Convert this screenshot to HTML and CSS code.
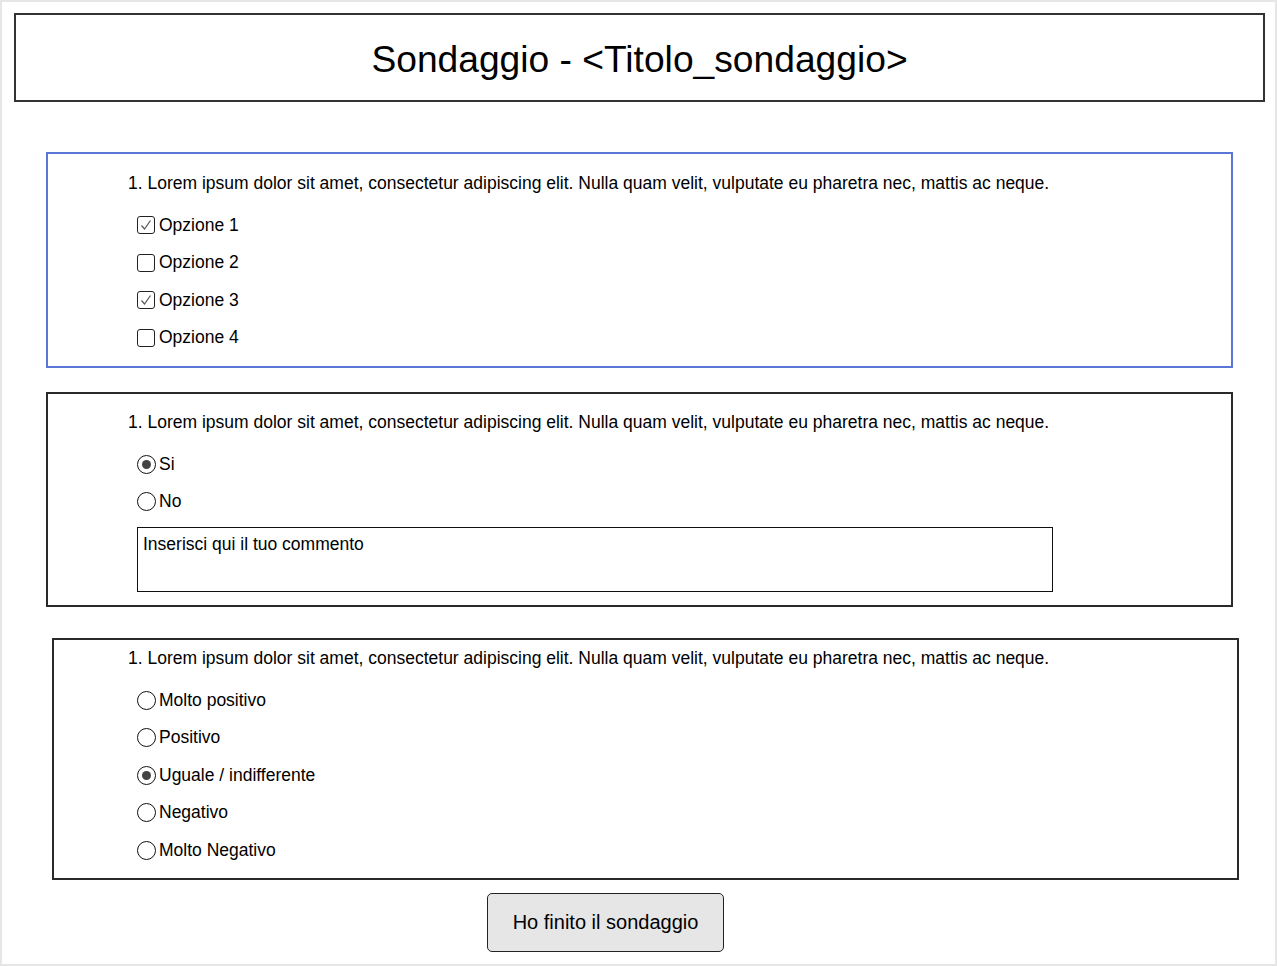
FILE: index.html
```html
<!DOCTYPE html>
<html lang="it">
<head>
<meta charset="utf-8">
<title>Sondaggio</title>
<link rel="stylesheet" href="styles.css">
</head>
<body>
<div class="frame">
  <header class="title-box">
    <h1 class="title">Sondaggio - &lt;Titolo_sondaggio&gt;</h1>
  </header>

  <section class="card card-active card-1">
    <p class="question">1. Lorem ipsum dolor sit amet, consectetur adipiscing elit. Nulla quam velit, vulputate eu pharetra nec, mattis ac neque.</p>
    <ul class="options">
      <li class="option"><span class="check checked"><svg viewBox="0 0 18 18" width="18" height="18"><polyline points="4.5,9.5 7.5,13 13.5,4.5" fill="none" stroke="#555" stroke-width="1.2"/></svg></span>Opzione 1</li>
      <li class="option"><span class="check"></span>Opzione 2</li>
      <li class="option"><span class="check checked"><svg viewBox="0 0 18 18" width="18" height="18"><polyline points="4.5,9.5 7.5,13 13.5,4.5" fill="none" stroke="#555" stroke-width="1.2"/></svg></span>Opzione 3</li>
      <li class="option"><span class="check"></span>Opzione 4</li>
    </ul>
  </section>

  <section class="card card-2">
    <p class="question">1. Lorem ipsum dolor sit amet, consectetur adipiscing elit. Nulla quam velit, vulputate eu pharetra nec, mattis ac neque.</p>
    <ul class="options">
      <li class="option"><span class="radio selected"></span>Si</li>
      <li class="option"><span class="radio"></span>No</li>
    </ul>
    <div class="comment">Inserisci qui il tuo commento</div>
  </section>

  <section class="card card-3">
    <p class="question">1. Lorem ipsum dolor sit amet, consectetur adipiscing elit. Nulla quam velit, vulputate eu pharetra nec, mattis ac neque.</p>
    <ul class="options">
      <li class="option"><span class="radio"></span>Molto positivo</li>
      <li class="option"><span class="radio"></span>Positivo</li>
      <li class="option"><span class="radio selected"></span>Uguale / indifferente</li>
      <li class="option"><span class="radio"></span>Negativo</li>
      <li class="option"><span class="radio"></span>Molto Negativo</li>
    </ul>
  </section>

  <button class="finish" type="button">Ho finito il sondaggio</button>
</div>
</body>
</html>
```

FILE: styles.css
```css
* { box-sizing: border-box; }

html, body {
  margin: 0;
  padding: 0;
  background: #ffffff;
}

body {
  font-family: "Liberation Sans", Arial, sans-serif;
  color: #000;
}

.frame {
  width: 1277px;
  height: 966px;
  border: 2px solid #e6e6e6;
  display: flex;
  flex-direction: column;
  align-items: flex-start;
  padding-top: 11px;
}

.title-box {
  margin-left: 12px;
  width: 1251px;
  height: 89px;
  border: 2px solid #333;
  display: flex;
  align-items: center;
  justify-content: center;
}

.title {
  margin: 0;
  font-weight: normal;
  font-size: 37.2px;
  line-height: 40px;
  padding-top: 2px;
}

.card {
  width: 1187px;
  border: 2px solid #2a2a2a;
  padding-left: 80px;
}

.card-active { border-color: #5b76d8; }

.card-1 {
  margin-top: 50px;
  margin-left: 44px;
  height: 216px;
  padding-top: 19px;
}

.card-2 {
  margin-top: 24px;
  margin-left: 44px;
  height: 215px;
  padding-top: 18px;
}

.card-3 {
  margin-top: 31px;
  margin-left: 50px;
  height: 242px;
  padding-top: 8px;
  padding-left: 74px;
}

.question {
  margin: 0;
  font-size: 17.5px;
  line-height: 20px;
}

.options {
  list-style: none;
  margin: 13.25px 0 0 9px;
  padding: 0;
}

.option {
  height: 37.5px;
  display: flex;
  align-items: center;
  font-size: 17.5px;
}

.check {
  width: 18px;
  height: 18px;
  border: 1.5px solid #222;
  border-radius: 3px;
  margin-right: 4px;
  display: inline-flex;
  align-items: center;
  justify-content: center;
  flex: none;
}

.check svg { display: block; margin: -1.5px; }

.radio {
  width: 19px;
  height: 19px;
  border: 1.5px solid #111;
  border-radius: 50%;
  margin-right: 3px;
  display: inline-flex;
  align-items: center;
  justify-content: center;
  flex: none;
}

.radio.selected::after {
  content: "";
  width: 9px;
  height: 9px;
  border-radius: 50%;
  background: #444;
}

.comment {
  margin: 6.75px 0 0 9px;
  width: 916px;
  height: 65px;
  border: 1.5px solid #111;
  padding: 6px 5px;
  font-size: 17.5px;
  line-height: 20px;
}

.finish {
  margin-top: 13px;
  margin-left: 485px;
  width: 237px;
  height: 59px;
  border: 1.5px solid #222;
  border-radius: 5px;
  background: #e6e6e6;
  font-family: "Liberation Sans", Arial, sans-serif;
  font-size: 20px;
  color: #000;
  padding: 0;
}
```
